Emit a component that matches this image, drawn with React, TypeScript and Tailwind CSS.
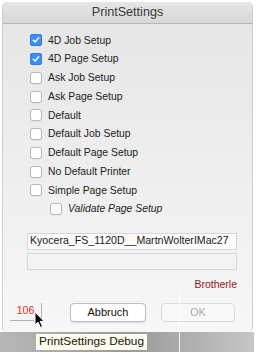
/** PrintSettings dialog — macOS sheet with option checkboxes, printer fields and debug tooltip. */

type Opt = { label: string; checked?: boolean; nested?: boolean; italic?: boolean };

const options: Opt[] = [
  { label: "4D Job Setup", checked: true },
  { label: "4D Page Setup", checked: true },
  { label: "Ask Job Setup" },
  { label: "Ask Page Setup" },
  { label: "Default" },
  { label: "Default Job Setup" },
  { label: "Default Page Setup" },
  { label: "No Default Printer" },
  { label: "Simple Page Setup" },
  { label: "Validate Page Setup", nested: true, italic: true },
];

function Box({ checked }: { checked?: boolean }) {
  if (checked) {
    return (
      <span className="flex h-[12px] w-[12px] shrink-0 items-center justify-center rounded-[3px] bg-[#3c8ef5] shadow-[inset_0_0_0_1px_#2f7de6]">
        <svg width="8" height="8" viewBox="0 0 8 8">
          <path d="M1.3 4.2 L3.2 6 L6.7 1.6" fill="none" stroke="white" strokeWidth="1.5" strokeLinecap="round" strokeLinejoin="round" />
        </svg>
      </span>
    );
  }
  return <span className="h-[12px] w-[12px] shrink-0 rounded-[3px] border border-[#b9b9b9] bg-white shadow-[0_0.5px_0.5px_rgba(0,0,0,0.08)]" />;
}

export default function App() {
  return (
    <div className="relative h-[356px] w-[264px] overflow-hidden bg-white font-['Liberation_Sans',Arial,sans-serif]">
      <div className="ml-[2px] mt-[2px] flex h-[330px] w-[251px] flex-col overflow-hidden rounded-[5px] border-x border-[#cfcfcf] bg-linear-to-b from-[#e5e5e5] to-[#f7f7f7]">
        <div className="flex h-[22px] shrink-0 items-center justify-center border-b border-[#b5b5b5] bg-linear-to-b from-[#e6e6e6] to-[#d7d7d7] text-[12.6px] text-[#3a3a3a]">
          PrintSettings
        </div>

        <div className="pt-[7px]">
          {options.map((o) => (
            <div
              key={o.label}
              className={`flex h-[18.75px] items-center gap-[6px] text-[10.4px] text-[#222] ${o.nested ? "pl-[47px]" : "pl-[27px]"}`}
            >
              <Box checked={o.checked} />
              <span className={o.italic ? "italic" : ""}>{o.label}</span>
            </div>
          ))}
        </div>

        <div className="ml-[24px] mt-[14px] flex h-[17px] w-[210px] items-center border border-[#d6d6d6] bg-[#fbfbfb] pl-[2px] text-[10.6px] text-[#1a1a1a]">
          Kyocera_FS_1120D__MartnWolterIMac27
        </div>
        <div className="ml-[24px] mt-[3px] h-[17px] w-[210px] border border-[#d6d6d6] bg-[#f3f3f3]" />

        <div className="mt-[8px] w-[234px] text-right text-[10.5px] leading-[12px] text-[#8e2020]">Brotherle</div>

        <div className="mt-[13px] flex items-start pl-[7px]">
          <div className="flex h-[18px] w-[32px] items-center justify-center border-b border-r border-[#b3b3b3] text-[10.5px] text-[#e02a2a]">
            106
          </div>
          <button className="ml-[28px] h-[19px] w-[76px] rounded-[4px] border border-[#c2c2c2] bg-white text-[11px] text-[#111] shadow-[0_0.5px_1px_rgba(0,0,0,0.12)]">
            Abbruch
          </button>
          <button className="ml-[15px] h-[19px] w-[74px] rounded-[4px] border border-[#dcdcdc] bg-[#f8f8f8] text-[11px] text-[#adadad]">
            OK
          </button>
        </div>
      </div>

      <div className="h-[20px] w-[254px] bg-linear-to-r from-[#b7b7b7] via-[#999999] to-[#c6c6c6] pl-[36px] pt-[2px]">
        <div className="flex h-[16px] w-[111px] items-center justify-center bg-[#fbfbee] text-[11.8px] text-[#1b1408]">
          PrintSettings Debug
        </div>
      </div>

      {/* stray white screen line */}
      <div className="absolute left-[179px] top-[292px] h-[64px] w-px bg-white/90" />

      {/* mouse pointer */}
      <svg className="absolute left-[34px] top-[311px]" width="12" height="18" viewBox="0 0 12 18">
        <path d="M1 1 L1 14 L4 11 L6.5 16.5 L8.5 15.6 L6.2 10.3 L10 10.3 Z" fill="#000" stroke="#fff" strokeWidth="1" strokeLinejoin="round" />
      </svg>
    </div>
  );
}
